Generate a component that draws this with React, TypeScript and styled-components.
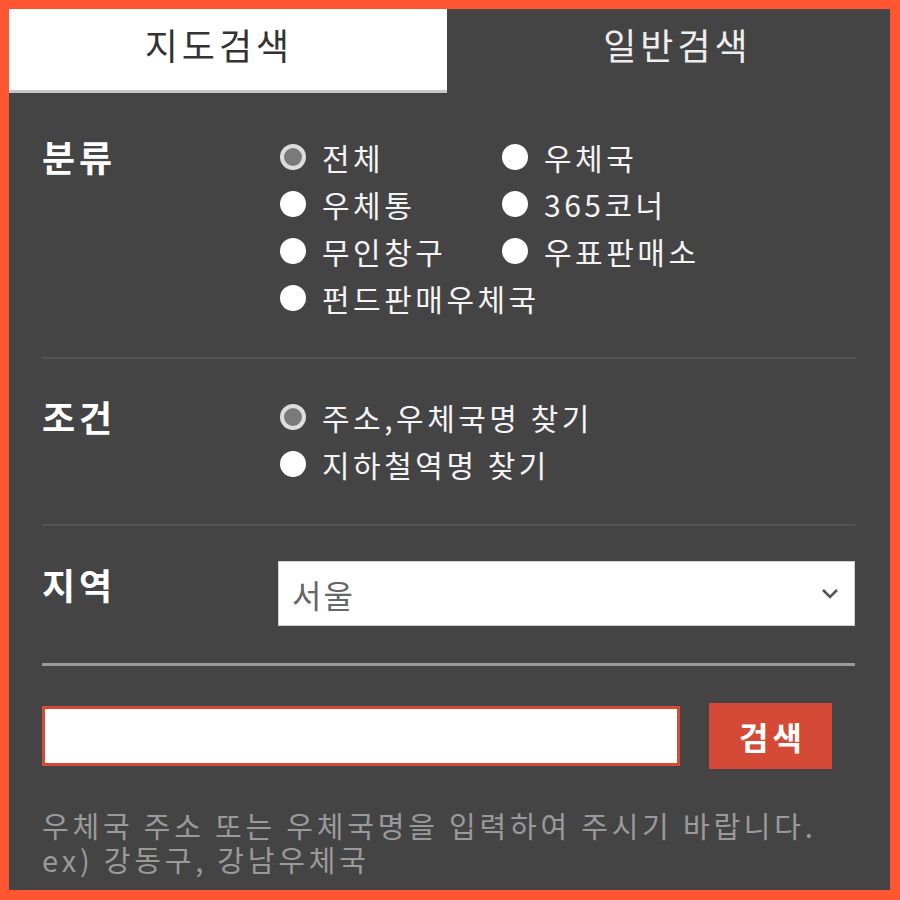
import { createGlobalStyle, styled } from 'styled-components';

const GlobalStyle = createGlobalStyle`
  html, body {
    margin: 0;
    padding: 0;
    background: #ff5531;
  }
  * {
    box-sizing: border-box;
  }
`;

const typeOptions = [
  { label: '전체', checked: true },
  { label: '우체국' },
  { label: '우체통' },
  { label: '365코너' },
  { label: '무인창구' },
  { label: '우표판매소' },
  { label: '펀드판매우체국' },
];

const conditionOptions = [
  { label: '주소,우체국명 찾기', checked: true },
  { label: '지하철역명 찾기' },
];

const Radio = ({ label, checked }: { label: string; checked?: boolean }) => (
  <RadioItem>
    <Dot $checked={checked} />
    <span>{label}</span>
  </RadioItem>
);

const App = () => {
  return (
    <>
      <GlobalStyle />
      <Frame>
        <Panel>
          <Tabs>
            <Tab $active>지도검색</Tab>
            <Tab>일반검색</Tab>
          </Tabs>
          <Body>
            <Section $top={40} $bottom={36}>
              <Label>분류</Label>
              <RadioGrid $columns={2}>
                {typeOptions.map((o) => (
                  <Radio key={o.label} label={o.label} checked={o.checked} />
                ))}
              </RadioGrid>
            </Section>
            <Divider />
            <Section $top={34} $bottom={37}>
              <Label>조건</Label>
              <RadioGrid $columns={1}>
                {conditionOptions.map((o) => (
                  <Radio key={o.label} label={o.label} checked={o.checked} />
                ))}
              </RadioGrid>
            </Section>
            <Divider />
            <Section $top={35} $bottom={37}>
              <Label>지역</Label>
              <SelectBox>
                <span>서울</span>
                <svg width="20" height="12" viewBox="0 0 20 12">
                  <path d="M3 2 L10 9 L17 2" fill="none" stroke="#555" strokeWidth="2.6" />
                </svg>
              </SelectBox>
            </Section>
            <ThickDivider />
            <SearchRow>
              <SearchInput type="text" />
              <SearchButton type="button">검색</SearchButton>
            </SearchRow>
            <Help>
              <HelpLine>우체국 주소 또는 우체국명을 입력하여 주시기 바랍니다.</HelpLine>
              <HelpLine>ex) 강동구, 강남우체국</HelpLine>
            </Help>
          </Body>
        </Panel>
      </Frame>
    </>
  );
};

export default App;

const Frame = styled.div`
  width: 900px;
  height: 900px;
  padding: 9px 10px 10px 9px;
`;

const Panel = styled.div`
  height: 100%;
  background: #444444;
  font-family: 'Noto Sans CJK KR', 'Noto Sans', sans-serif;
`;

const Tabs = styled.div`
  display: grid;
  grid-template-columns: 438px 1fr;
  height: 84px;
`;

const Tab = styled.div<{ $active?: boolean }>`
  display: flex;
  align-items: center;
  justify-content: center;
  padding: ${(p) => (p.$active ? '0 18px 12px 0' : '0 0 12px 18px')};
  font-size: 36px;
  letter-spacing: 4px;
  background: ${(p) => (p.$active ? '#ffffff' : 'transparent')};
  color: ${(p) => (p.$active ? '#333333' : '#eeeeee')};
  border-bottom: 3px solid ${(p) => (p.$active ? '#c8c8c8' : 'transparent')};
`;

const Body = styled.div`
  padding: 0 35px 0 33px;
`;

const Section = styled.div<{ $top: number; $bottom: number }>`
  display: grid;
  grid-template-columns: 236px 1fr;
  align-items: start;
  padding: ${(p) => `${p.$top}px 0 ${p.$bottom}px`};
`;

const Label = styled.div`
  font-size: 36px;
  font-weight: 700;
  line-height: 47px;
  letter-spacing: 4px;
  color: #ffffff;
`;

const RadioGrid = styled.div<{ $columns: number }>`
  display: grid;
  grid-template-columns: repeat(${(p) => p.$columns}, 222px);
`;

const RadioItem = styled.div`
  display: flex;
  align-items: center;
  gap: 16px;
  height: 47px;
  padding-left: 2px;
  font-size: 30px;
  letter-spacing: 3.5px;
  color: #f4f4f4;
  white-space: nowrap;
`;

const Dot = styled.span<{ $checked?: boolean }>`
  flex: none;
  width: 26px;
  height: 26px;
  border-radius: 50%;
  background: ${(p) => (p.$checked ? '#7a7a7a' : '#ffffff')};
  border: ${(p) => (p.$checked ? '4px solid #dddddd' : 'none')};
`;

const Divider = styled.div`
  height: 2px;
  background: #545454;
`;

const ThickDivider = styled.div`
  height: 3px;
  background: #9a9a9a;
`;

const SelectBox = styled.div`
  display: flex;
  align-items: center;
  justify-content: space-between;
  height: 65px;
  padding: 0 14px 0 13px;
  background: #ffffff;
  border: 1px solid #cfcfcf;
  font-size: 32px;
  letter-spacing: 2px;
  color: #666666;
`;

const SearchRow = styled.div`
  display: flex;
  align-items: center;
  gap: 29px;
  margin-top: 37px;
`;

const SearchInput = styled.input`
  width: 638px;
  height: 60px;
  border: 3px solid #d84a35;
  background: #ffffff;
  outline: none;
`;

const SearchButton = styled.button`
  width: 123px;
  height: 66px;
  border: none;
  background: #d44a36;
  color: #ffffff;
  font-family: inherit;
  font-size: 32px;
  font-weight: 700;
  letter-spacing: 4px;
  text-indent: 4px;
`;

const Help = styled.div`
  margin-top: 39px;
`;

const HelpLine = styled.div`
  font-size: 29px;
  line-height: 34px;
  letter-spacing: 3.8px;
  color: #9a9a9a;
  white-space: nowrap;
`;
